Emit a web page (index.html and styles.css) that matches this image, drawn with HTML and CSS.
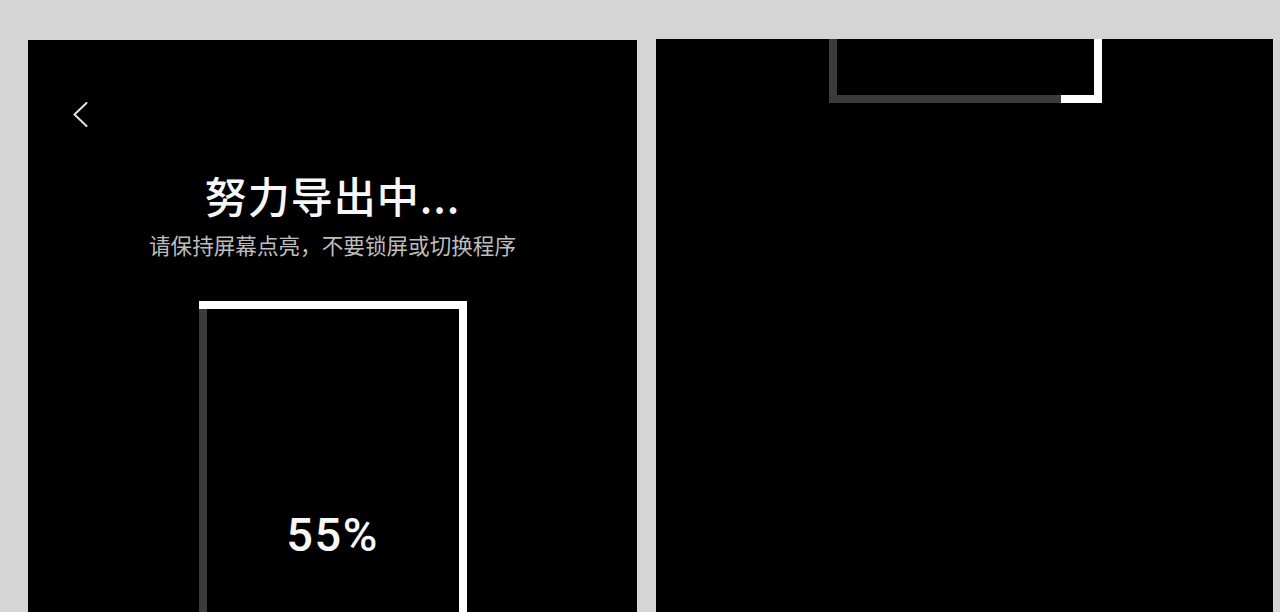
FILE: index.html
```html
<!DOCTYPE html>
<html lang="zh-CN">
<head>
<meta charset="utf-8">
<title>导出中</title>
<link rel="stylesheet" href="styles.css">
</head>
<body>
<div class="stage">
  <section class="screen screen-left">
    <div class="back">
      <svg width="15" height="25" viewBox="0 0 15 25"><polyline points="13.5,1 1.5,12.5 13.5,24" fill="none" stroke="#e2e2e2" stroke-width="2" stroke-linecap="round" stroke-linejoin="round"/></svg>
    </div>
    <h1 class="title">努力导出中...</h1>
    <p class="subtitle">请保持屏幕点亮，不要锁屏或切换程序</p>
    <div class="progress-box">
      <div class="percent">55%</div>
    </div>
  </section>
  <section class="screen screen-right">
    <div class="progress-box-end"></div>
  </section>
</div>
</body>
</html>
```

FILE: styles.css
```css
html, body {
  margin: 0;
  padding: 0;
}
body {
  width: 1280px;
  height: 612px;
  overflow: hidden;
  background: #d5d5d5;
  font-family: "Noto Sans CJK SC", "Noto Sans", sans-serif;
}
.stage {
  display: flex;
  align-items: flex-start;
  padding: 39px 0 0 28px;
  gap: 19px;
}
.screen {
  background: #000;
  overflow: hidden;
}
.screen-left {
  width: 609px;
  height: 572px;
  margin-top: 1px;
  padding-top: 62px;
  box-sizing: border-box;
  display: flex;
  flex-direction: column;
  align-items: center;
}
.screen-right {
  width: 617px;
  height: 573px;
}
.back {
  align-self: flex-start;
  margin-left: 45px;
  height: 25px;
}
.back svg {
  display: block;
}
.title {
  margin: 47px 0 0;
  font-size: 42px;
  line-height: 42px;
  font-weight: 500;
  color: #f7f7f7;
  letter-spacing: 1px;
}
.subtitle {
  margin: 18px 0 0;
  font-size: 21.6px;
  line-height: 22px;
  color: #bdbdbd;
}
.progress-box {
  margin-top: 45px;
  width: 268px;
  height: 400px;
  flex-shrink: 0;
  box-sizing: border-box;
  padding-top: 210px;
  box-shadow: inset 0 8px 0 #fff, inset -8px 0 0 #fff, inset 8px 0 0 #3b3b3b;
  text-align: center;
}
.percent {
  font-family: Roboto, "Noto Sans", sans-serif;
  font-weight: 500;
  font-size: 47px;
  line-height: 47px;
  letter-spacing: 1.5px;
  color: #f7f7f7;
}
.progress-box-end {
  position: relative;
  margin-left: 173px;
  width: 273px;
  height: 64px;
  box-shadow: inset -8px 0 0 #fff, inset 0 -8px 0 #3b3b3b, inset 8px 0 0 #3b3b3b;
}
.progress-box-end::after {
  content: "";
  position: absolute;
  right: 0;
  bottom: 0;
  width: 41px;
  height: 8px;
  background: #fff;
}
```
